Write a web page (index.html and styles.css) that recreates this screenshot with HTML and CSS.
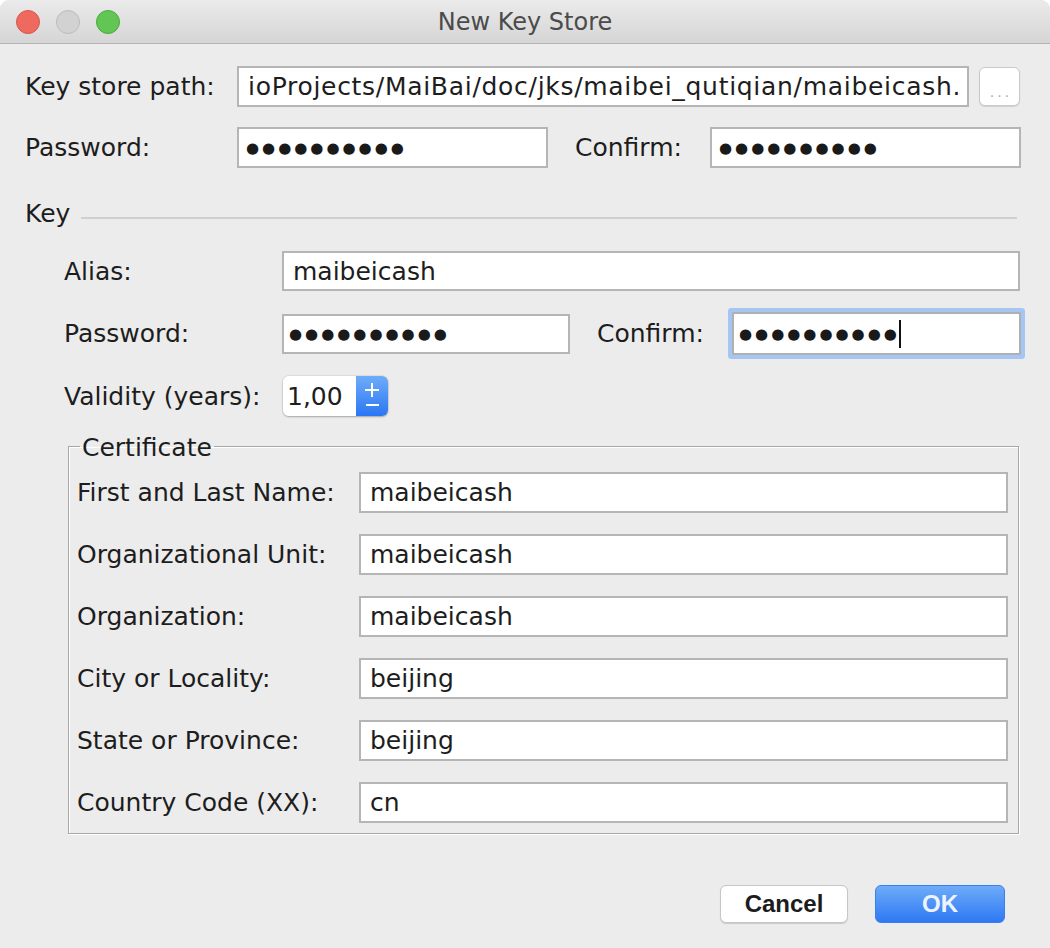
FILE: index.html
```html
<!DOCTYPE html>
<html>
<head>
<meta charset="utf-8">
<link rel="stylesheet" href="styles.css">
</head>
<body>
<div class="window">
  <div class="titlebar">
    <div class="lights">
      <span class="light red"></span>
      <span class="light gray"></span>
      <span class="light green"></span>
    </div>
    <div class="title">New Key Store</div>
  </div>
  <div class="content">
    <div class="row r1">
      <div class="lbl w-top">Key store path:</div>
      <div class="field path"><span class="clip path-text">ioProjects/MaiBai/doc/jks/maibei_qutiqian/maibeicash.jks</span></div>
      <div class="browse"><span class="ell">...</span></div>
    </div>
    <div class="row r2">
      <div class="lbl w-top">Password:</div>
      <div class="field pw-top"><span class="dots">●●●●●●●●●●</span></div>
      <div class="lbl conf-top">Confirm:</div>
      <div class="field pw-top-c"><span class="dots">●●●●●●●●●●</span></div>
    </div>
    <div class="section">
      <span class="section-title">Key</span>
      <div class="sep"></div>
    </div>
    <div class="key">
      <div class="row k1">
        <div class="lbl w-key">Alias:</div>
        <div class="field alias">maibeicash</div>
      </div>
      <div class="row k2">
        <div class="lbl w-key">Password:</div>
        <div class="field pw-key"><span class="dots">●●●●●●●●●●</span></div>
        <div class="lbl conf-key">Confirm:</div>
        <div class="field pw-key-c focused"><span class="dots">●●●●●●●●●●</span><span class="caret"></span></div>
      </div>
      <div class="row k3">
        <div class="lbl w-key">Validity (years):</div>
        <div class="spinner">
          <div class="spin-text"><span class="spin-clip">1,000</span></div>
          <div class="spin-btn"><span class="plus"></span><span class="minus"></span></div>
        </div>
      </div>
      <fieldset class="cert">
        <legend>Certificate</legend>
        <div class="crow first"><div class="lbl w-cert">First and Last Name:</div><div class="field cfield">maibeicash</div></div>
        <div class="crow"><div class="lbl w-cert">Organizational Unit:</div><div class="field cfield">maibeicash</div></div>
        <div class="crow"><div class="lbl w-cert">Organization:</div><div class="field cfield">maibeicash</div></div>
        <div class="crow"><div class="lbl w-cert">City or Locality:</div><div class="field cfield">beijing</div></div>
        <div class="crow"><div class="lbl w-cert">State or Province:</div><div class="field cfield">beijing</div></div>
        <div class="crow"><div class="lbl w-cert">Country Code (XX):</div><div class="field cfield">cn</div></div>
      </fieldset>
    </div>
    <div class="buttons">
      <div class="btn cancel">Cancel</div>
      <div class="btn ok">OK</div>
    </div>
  </div>
</div>
</body>
</html>
```

FILE: styles.css
```css
html, body {
  margin: 0;
  padding: 0;
  background: #ffffff;
}
body {
  font-family: "DejaVu Sans", sans-serif;
  font-size: 25px;
  color: #1d1d1d;
}
.window {
  width: 1050px;
  height: 948px;
  background: #ececec;
  border-radius: 9px 9px 0 0;
  overflow: hidden;
}
.titlebar {
  height: 43px;
  border-bottom: 1px solid #b3b3b3;
  background: linear-gradient(#ebebeb, #d5d5d5);
  display: flex;
  align-items: center;
  position: relative;
}
.lights {
  display: flex;
  gap: 16px;
  padding-left: 16px;
}
.light {
  width: 24px;
  height: 24px;
  box-sizing: border-box;
  border-radius: 50%;
  display: block;
}
.red { background: #ee6a5f; border: 1px solid #d9564b; }
.gray { background: #d2d2d2; border: 1px solid #bcbcbc; }
.green { background: #62c655; border: 1px solid #4ba93e; }
.title {
  position: absolute;
  left: 0;
  right: 0;
  top: 0;
  bottom: 0;
  display: flex;
  align-items: center;
  justify-content: center;
  font-size: 24px;
  color: #4b4b4b;
}
.content {
  padding: 22px 30px 0 25px;
}
.row {
  display: flex;
  align-items: center;
}
.lbl {
  flex: none;
  white-space: nowrap;
}
.field {
  flex: none;
  box-sizing: border-box;
  height: 41px;
  background: #ffffff;
  border: 2px solid #b5b5b5;
  padding: 0 9px;
  display: flex;
  align-items: center;
  overflow: hidden;
  white-space: nowrap;
}
.clip {
  flex: 1;
  min-width: 0;
  overflow: hidden;
  white-space: nowrap;
}
.path-text {
  letter-spacing: 0.7px;
}
.w-top { width: 212px; }
.path { width: 732px; }
.browse {
  flex: none;
  box-sizing: border-box;
  width: 41px;
  height: 39px;
  margin-left: 10px;
  background: #ffffff;
  border: 1px solid #c9c9c9;
  border-radius: 6px;
  box-shadow: 0 1px 1px rgba(0, 0, 0, 0.12);
  display: flex;
  align-items: flex-end;
  justify-content: center;
  padding-bottom: 8px;
}
.ell {
  font-family: "Liberation Sans", sans-serif;
  font-size: 16px;
  line-height: 10px;
  color: #b0b0b0;
  letter-spacing: 3px;
  padding-left: 3px;
}
.r2 { margin-top: 20px; }
.pw-top { width: 311px; padding-left: 7px; }
.conf-top { width: 135px; margin-left: 27px; }
.pw-top-c { width: 311px; padding-left: 7px; }
.dots {
  font-family: "DejaVu Sans", sans-serif;
  font-size: 15px;
  letter-spacing: 3px;
  color: #1a1a1a;
}
.section {
  display: flex;
  align-items: center;
  margin-top: 31px;
  height: 29px;
}
.section-title { flex: none; }
.sep {
  flex: 1;
  height: 2px;
  background: #cfcfcf;
  margin-left: 11px;
  margin-right: 3px;
  margin-top: 9px;
}
.key {
  padding-left: 39px;
}
.w-key { width: 218px; }
.k1 { margin-top: 23px; }
.alias { width: 738px; height: 40px; }
.k2 { margin-top: 21px; }
.pw-key { width: 288px; height: 40px; padding-left: 5px; }
.conf-key { width: 135px; margin-left: 27px; }
.pw-key-c { width: 289px; height: 43px; padding-left: 5px; }
.focused {
  box-shadow: 0 0 0 4px #a5c6f2;
  border-color: #b0b0b0;
  border-radius: 1px;
}
.caret {
  display: block;
  width: 2px;
  height: 28px;
  background: #111;
  margin-left: -1px;
}
.k3 { margin-top: 21px; }
.spinner {
  display: flex;
  margin-left: 1px;
  height: 40px;
  border-radius: 6px;
  box-shadow: 0 1px 2px rgba(0, 0, 0, 0.25), 0 0 0 1px rgba(0, 0, 0, 0.06);
  overflow: hidden;
}
.spin-text {
  width: 73px;
  background: #ffffff;
  padding-left: 4px;
  box-sizing: border-box;
  display: flex;
  align-items: center;
}
.spin-clip {
  width: 57px;
  overflow: hidden;
  white-space: nowrap;
}
.spin-btn {
  width: 32px;
  background: linear-gradient(#6eacf9, #2b77f4);
  display: flex;
  flex-direction: column;
  align-items: center;
  position: relative;
}
.plus {
  display: block;
  width: 14px;
  height: 14px;
  margin-top: 7px;
  background:
    linear-gradient(#ffffff, #ffffff) center / 14px 2px no-repeat,
    linear-gradient(#ffffff, #ffffff) center / 2px 14px no-repeat;
}
.minus {
  display: block;
  width: 13px;
  height: 2px;
  background: #ffffff;
  margin-top: 7px;
}
.cert {
  margin: 15px 0 0 4px;
  padding: 0 10px 10px 8px;
  width: 951px;
  box-sizing: border-box;
  border: 1px solid #a7a7a7;
  box-shadow: 1px 1px 0 #ffffff, inset 1px 1px 0 #ffffff;
}
.cert legend {
  padding: 3px 2px 0 2px;
  margin-left: 3px;
  line-height: 28px;
}
.crow {
  display: flex;
  align-items: center;
  margin-top: 21px;
}
.crow.first { margin-top: 10px; }
.w-cert { width: 282px; }
.cfield { width: 649px; }
.buttons {
  display: flex;
  justify-content: flex-end;
  gap: 27px;
  margin-top: 51px;
  margin-right: 15px;
}
.btn {
  box-sizing: border-box;
  height: 38px;
  border-radius: 6px;
  font-family: "Liberation Sans", sans-serif;
  font-weight: bold;
  font-size: 24px;
  display: flex;
  align-items: center;
  justify-content: center;
}
.cancel {
  width: 128px;
  background: #ffffff;
  border: 1px solid #c6c6c6;
  box-shadow: 0 1px 1px rgba(0, 0, 0, 0.15);
  color: #1c1c1c;
}
.ok {
  width: 130px;
  background: linear-gradient(#6eabf9, #2e79f4);
  border: 1px solid #3b80ea;
  color: #eef4fe;
}
```
